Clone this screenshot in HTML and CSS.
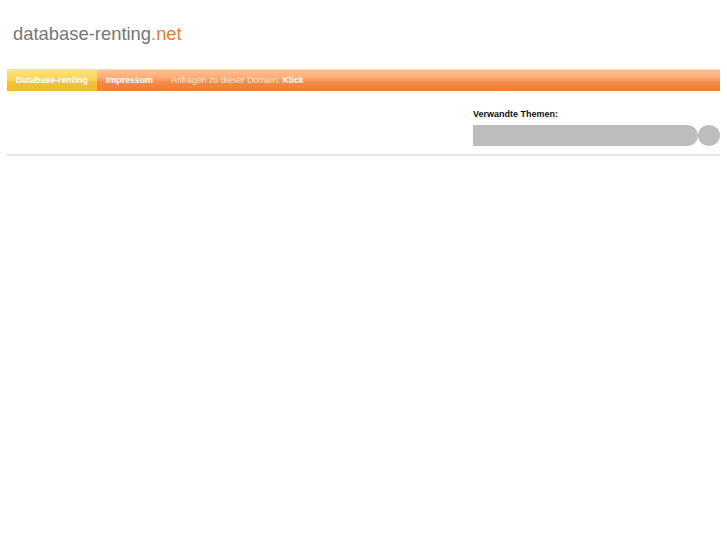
FILE: index.html
```html
<!DOCTYPE html>
<html lang="de">
<head>
<meta charset="utf-8">
<title>database-renting.net</title>
<link rel="stylesheet" href="styles.css">
</head>
<body>
<div class="page">
  <header class="header">
    <div class="logo"><span class="logo-name">database-renting</span><span class="logo-tld">.net</span></div>
  </header>
  <nav class="nav">
    <a class="nav-item active" href="#">Database-renting</a>
    <a class="nav-item" href="#">Impressum</a>
    <span class="nav-item plain">Anfragen zu dieser Domain: <b>Klick</b></span>
  </nav>
  <div class="content">
    <div class="main"></div>
    <aside class="side">
      <h3 class="side-title">Verwandte Themen:</h3>
      <div class="search">
        <div class="search-field"></div>
        <div class="search-btn"></div>
      </div>
    </aside>
  </div>
</div>
</body>
</html>
```
FILE: styles.css
```css
html, body {
  margin: 0;
  padding: 0;
  background: #fff;
  font-family: "Liberation Sans", Arial, Helvetica, sans-serif;
}
.page {
  width: 713px;
  margin: 0 auto;
}
.header {
  height: 69px;
  padding-left: 6px;
  box-sizing: border-box;
  padding-top: 22px;
}
.logo {
  font-size: 18.4px;
  line-height: 24px;
  color: #767676;
}
.logo-tld {
  color: #f07a2e;
}
.nav {
  display: flex;
  height: 22px;
  background: linear-gradient(to bottom, #ffc090 0%, #ffad78 35%, #f08a45 60%, #ee7f37 100%);
  border-top: 1px solid #ffd8bc;
  box-sizing: border-box;
}
.nav-item {
  display: block;
  padding: 0 9px;
  font-size: 8.8px;
  line-height: 21px;
  font-weight: bold;
  color: #fff;
  text-decoration: none;
  white-space: nowrap;
}
.nav-item.active {
  background: linear-gradient(to bottom, #ffe27a 0%, #fbd45a 45%, #f1c232 60%, #eebd2c 100%);
  width: 90px;
  box-sizing: border-box;
}
.nav-item.plain {
  font-weight: normal;
  color: #ffe6d2;
}
.nav-item.plain b {
  color: #fff;
}
.content {
  display: flex;
  justify-content: space-between;
  border-bottom: 2px solid #e6e6e6;
  height: 65px;
  box-sizing: border-box;
}
.side {
  width: 247px;
  padding-top: 17px;
}
.side-title {
  margin: 0 0 5px 0;
  font-size: 9px;
  line-height: 12px;
  font-weight: bold;
  color: #111;
}
.search {
  display: flex;
  height: 21px;
}
.search-field {
  width: 225px;
  height: 21px;
  background: #bdbdbd;
  border-radius: 0 11px 11px 0;
}
.search-btn {
  width: 22px;
  height: 21px;
  border-radius: 50%;
  background: #bdbdbd;
}
```
